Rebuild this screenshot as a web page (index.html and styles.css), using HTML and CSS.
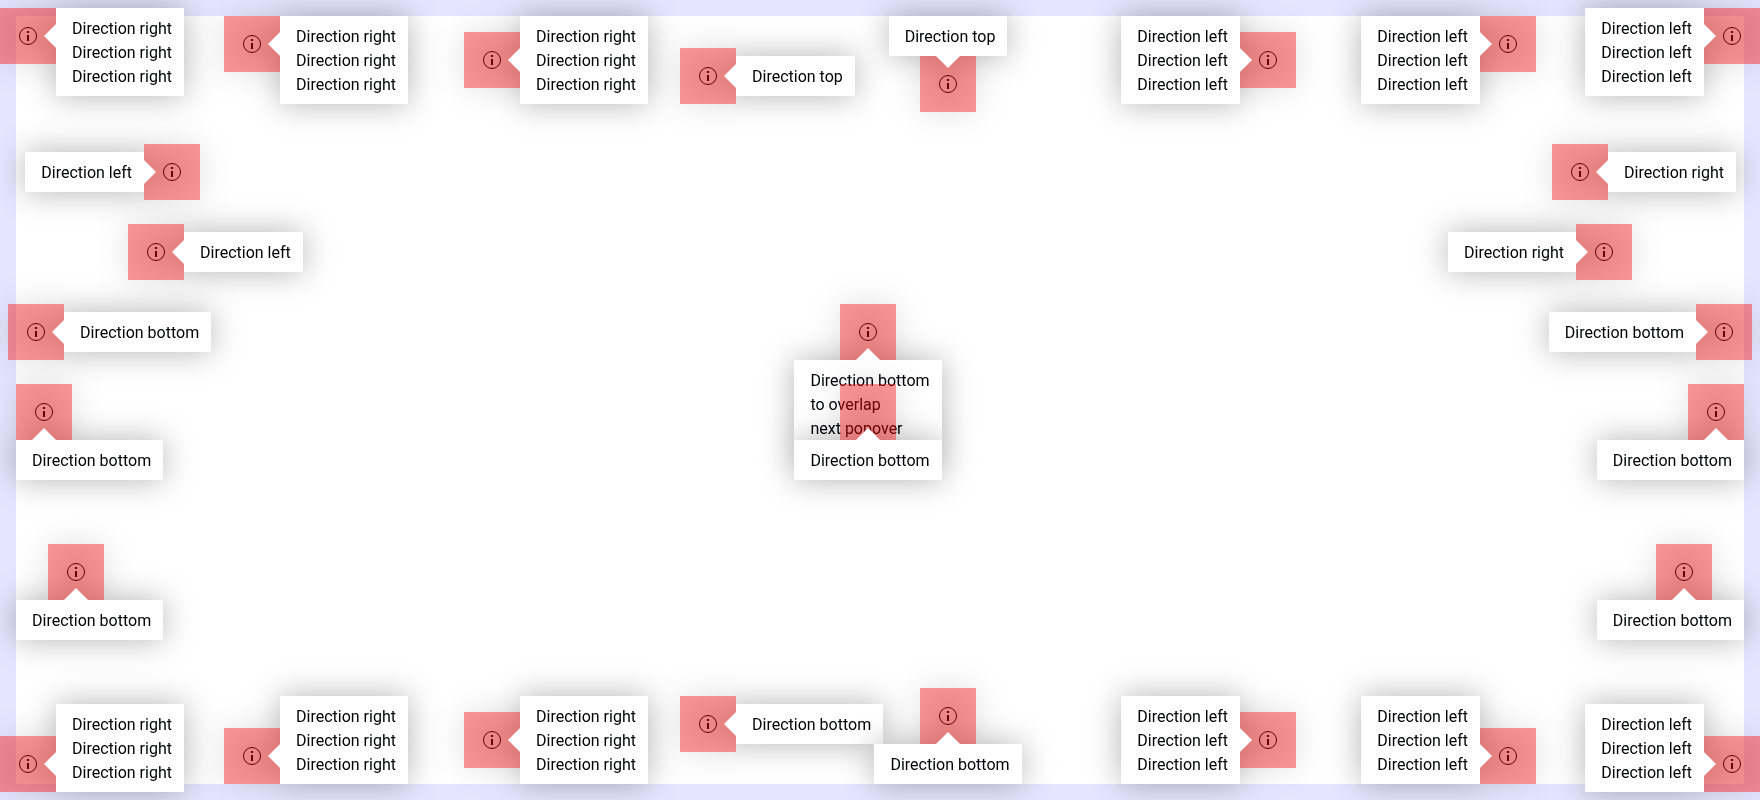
FILE: index.html
```
<!DOCTYPE html>
<html lang="en">
<head>
<meta charset="utf-8">
<title>Popover directions</title>
<link rel="stylesheet" href="styles.css">
</head>
<body>
<svg class="sprite" aria-hidden="true">
  <symbol id="info" viewBox="0 0 24 24">
    <circle cx="12" cy="12" r="8.500" fill="none" stroke="currentColor" stroke-width="1"/>
    <path fill="currentColor" d="M11 7h2v2h-2zM11 11h2v6h-2z"/>
  </symbol>
</svg>
<main class="stage" id="stage"></main>
<script src="popovers.js"></script>
</body>
</html>
```

FILE: popovers.js
```
const right = "Direction right";
const left = "Direction left";
const above = "Direction top";
const bottom = "Direction bottom";
const thrice = (text) => [text, text, text];

// [spot, side of the button on which the bubble opens, alignment, lines]
const popovers = [
  ["t1", "right", "start", thrice(right)],
  ["t2", "right", "start", thrice(right)],
  ["t3", "right", "center", thrice(right)],
  ["t4", "right", "center", [above]],
  ["t5", "top", "center", [above]],
  ["t6", "left", "center", thrice(left)],
  ["t7", "left", "start", thrice(left)],
  ["t8", "left", "start", thrice(left)],
  ["l1", "left", "center", [left]],
  ["l2", "right", "center", [left]],
  ["l3", "right", "center", [bottom]],
  ["l4", "bottom", "start", [bottom]],
  ["l5", "bottom", "start", [bottom]],
  ["c1", "bottom", "center", [bottom, "to overlap", "next popover"]],
  ["c2", "bottom", "center", [bottom]],
  ["r1", "right", "center", [right]],
  ["r2", "left", "center", [right]],
  ["r3", "left", "center", [bottom]],
  ["r4", "bottom", "end", [bottom]],
  ["r5", "bottom", "end", [bottom]],
  ["b1", "right", "end", thrice(right)],
  ["b2", "right", "end", thrice(right)],
  ["b3", "right", "center", thrice(right)],
  ["b4", "right", "center", [bottom]],
  ["b5", "bottom", "center", [bottom]],
  ["b6", "left", "center", thrice(left)],
  ["b7", "left", "end", thrice(left)],
  ["b8", "left", "end", thrice(left)],
];

document.getElementById("stage").innerHTML = popovers
  .map(([spot, side, align, lines]) => `
    <div class="popover ${spot} side-${side} align-${align}">
      <button class="trigger" type="button" aria-label="More information" aria-describedby="tip-${spot}">
        <svg class="icon" aria-hidden="true"><use href="#info"/></svg>
      </button>
      <div class="spacer">
        <div class="panel">
          <span class="arrow"></span>
          <div class="bubble" id="tip-${spot}" role="tooltip">${lines.join("<br>")}</div>
        </div>
      </div>
    </div>`)
  .join("");
```

FILE: styles.css
```
* { box-sizing: border-box; }

body {
  margin: 0;
  font: 16px/24px Roboto, "Liberation Sans", sans-serif;
  color: #010205;
  background: #fff;
}

.sprite { position: absolute; width: 0; height: 0; }

.stage {
  position: relative;
  min-height: 100vh;
  border: 16px solid #e5e5ff;
}

.popover {
  position: absolute;
  display: flex;
  width: 56px;
  height: 56px;
}

.trigger {
  display: flex;
  margin: auto;
  padding: 0;
  border: 0;
  background: none;
  color: #010205;
  cursor: pointer;
}

.icon { width: 24px; height: 24px; }

/* Tinted safe zone around the button; it casts one shadow with its bubble. */
.spacer {
  position: absolute;
  inset: 0;
  z-index: 1;
  background: rgba(255, 0, 0, .4);
  filter: drop-shadow(0 0 16px rgba(0, 0, 0, .3));
  pointer-events: none;
}

/* The panel spans the button's side; the bubble is aligned along it. */
.panel {
  position: absolute;
  display: flex;
}

.bubble {
  flex: none;
  padding: 9px 12px 7px 16px;
  background: #fff;
  white-space: nowrap;
}

.arrow {
  position: absolute;
  border: 12px solid transparent;
}

.side-right .panel { left: 100%; top: 0; height: 56px; }
.side-left .panel { right: 100%; top: 0; height: 56px; }
.side-top .panel { bottom: 100%; left: 0; width: 56px; }
.side-bottom .panel { top: 100%; left: 0; width: 56px; }

.side-right .arrow { right: 100%; top: 16px; border-left-width: 0; border-right-color: #fff; }
.side-left .arrow { left: 100%; top: 16px; border-right-width: 0; border-left-color: #fff; }
.side-top .arrow { top: 100%; left: 16px; border-bottom-width: 0; border-top-color: #fff; }
.side-bottom .arrow { bottom: 100%; left: 16px; border-top-width: 0; border-bottom-color: #fff; }

.side-right .panel, .side-left .panel { align-items: center; }
.side-right.align-start .panel, .side-left.align-start .panel { align-items: flex-start; }
.side-right.align-end .panel, .side-left.align-end .panel { align-items: flex-end; }

.align-center .panel { justify-content: center; }
.side-bottom.align-end .panel { justify-content: flex-end; }
.side-right .panel, .side-left .panel { justify-content: flex-start; }

/* Spots, measured from the inner edge of the frame */
.t1 { left: -16px; top: -8px; }
.t2 { left: 208px; top: 0; }
.t3 { left: 448px; top: 16px; }
.t4 { left: calc(50% - 200px); top: 32px; }
.t5 { left: calc(50% + 40px); top: 40px; }
.t6 { right: 448px; top: 16px; }
.t7 { right: 208px; top: 0; }
.t8 { right: -16px; top: -8px; }

.l1 { left: 128px; top: 128px; }
.l2 { left: 112px; top: 208px; }
.l3 { left: -8px; top: 288px; }
.l4 { left: 0; top: 368px; }
.l5 { left: 32px; top: 528px; }
.l5 .bubble { margin-left: -32px; }

.c1 { left: calc(50% - 40px); top: 288px; }
.c2 { left: calc(50% - 40px); top: 368px; }

.r1 { right: 136px; top: 128px; }
.r2 { right: 112px; top: 208px; }
.r3 { right: -8px; top: 288px; }
.r4 { right: 0; top: 368px; }
.r5 { right: 32px; top: 528px; }
.r5 .bubble { margin-right: -32px; }

.b1 { left: -16px; bottom: -8px; }
.b2 { left: 208px; bottom: 0; }
.b3 { left: 448px; bottom: 16px; }
.b4 { left: calc(50% - 200px); bottom: 32px; }
.b5 { left: calc(50% + 40px); bottom: 40px; }
.b6 { right: 448px; bottom: 16px; }
.b7 { right: 208px; bottom: 0; }
.b8 { right: -16px; bottom: -8px; }
```
